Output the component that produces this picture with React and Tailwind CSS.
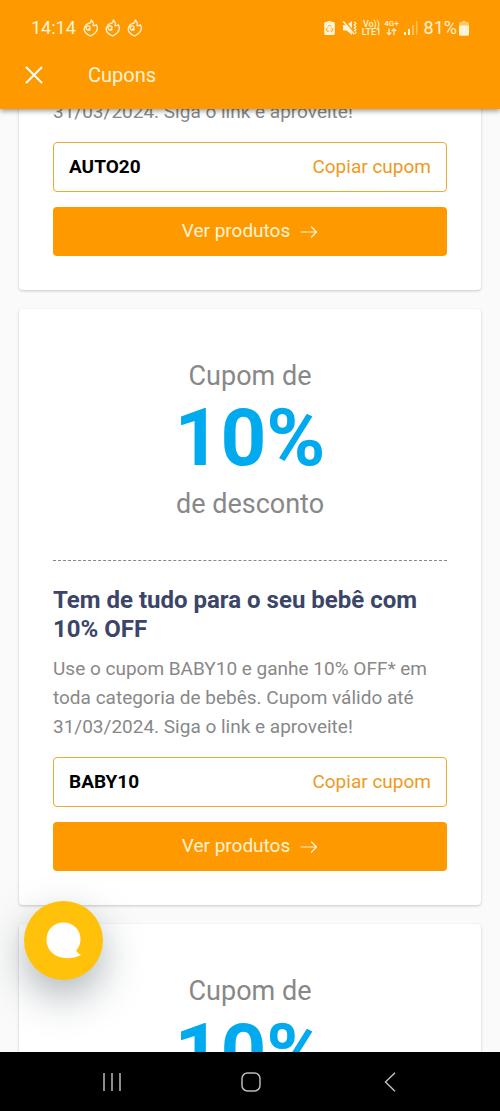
const coupons = [
    {
        id: 1,
        description: '31/03/2024. Siga o link e aproveite!',
        code: 'AUTO20',
    },
    {
        id: 2,
        discount: '10%',
        title: 'Tem de tudo para o seu bebê com 10% OFF',
        description: 'Use o cupom BABY10 e ganhe 10% OFF* em toda categoria de bebês. Cupom válido até 31/03/2024. Siga o link e aproveite!',
        code: 'BABY10',
    },
    {
        id: 3,
        discount: '10%',
    },
];

const SwirlIcon = () => (
    <svg width="16" height="18" viewBox="0 0 16 18" fill="none" stroke="currentColor" strokeWidth="1.3" strokeLinecap="round" strokeLinejoin="round">
        <path d="M5.600 10.200C7 10 7.600 8.200 6.500 7.300 5.200 6.300 3 7.300 3 9c0 1.800 2.300 2.700 4.200 1.700M2.200 7C.6 9.700 1.200 12.800 3.600 14.800c1.100.9 2.600 1.400 4.100 2.200 1.600-.9 3.200-1.800 4.500-3.100 2.400-2.400 3-5 1-8.200-.9.8-1.800 1.100-3.200 1C10.700 4.600 10.200 2.500 8.300 1 8.400 3.700 7.200 4.200 5.300 4.600 4 4.900 2.900 5.700 2.200 7" />
    </svg>
);

const BatterySaverIcon = () => (
    <svg width="11" height="16" viewBox="0 0 11 16" fill="none">
        <path d="M3.500 1h4v1H9.300c.9 0 1.500.6 1.500 1.500v10c0 .9-.6 1.500-1.500 1.500H1.700C.8 15 .2 14.400.2 13.500v-10C.2 2.600.8 2 1.700 2h1.800z" fill="currentColor" />
        <path d="M4.200 6.500 5.500 5l1.300 1.500M7.600 7.800l1.100 2-.8 1.400H6.500M4.700 11.200H3.100l-.8-1.400 1.100-2" stroke="#ff9900" strokeWidth="1" />
    </svg>
);

const MuteIcon = () => (
    <svg width="15" height="16" viewBox="0 0 15 16" fill="none">
        <path d="M1 5h3.500L10 1v14L4.500 10.500H1z" fill="currentColor" />
        <path d="M12.300 2l1.500 1.500L12.300 5l1.500 1.500L12.300 8l1.500 1.500-1.500 1.500 1.500 1.500-1.500 1.500" stroke="currentColor" strokeWidth="1.400" />
        <path d="M2.600 1 13 13" stroke="#ff9900" strokeWidth="1.300" />
        <path d="M1.300 1.500 12 14" stroke="currentColor" strokeWidth="1.400" />
    </svg>
);

const SignalIcon = () => (
    <svg width="14" height="14" viewBox="0 0 14 14" fill="currentColor">
        <rect x="0" y="11" width="2" height="3" />
        <rect x="4" y="8" width="2" height="6" />
        <rect x="8" y="4" width="2" height="10" opacity=".4" />
        <rect x="12" y="0" width="1.500" height="14" opacity=".4" />
    </svg>
);

const BatteryIcon = () => (
    <svg width="10" height="15" viewBox="0 0 10 15" fill="currentColor">
        <path d="M3 0h4v1h1.500C9.400 1 10 1.600 10 2.500V5H0V2.500C0 1.600.6 1 1.500 1H3z" opacity=".5" />
        <path d="M0 4.500h10v8.800c0 .9-.6 1.500-1.500 1.500h-7C.6 14.800 0 14.200 0 13.300z" />
    </svg>
);

const ArrowIcon = () => (
    <svg width="18" height="14" viewBox="0 0 18 14" fill="none" stroke="currentColor" strokeWidth="1.200" strokeLinecap="round" strokeLinejoin="round">
        <path d="M1 7h15.500M11.500 2l5 5-5 5" />
    </svg>
);

const StatusBar = () => (
    <div className="flex h-14 items-center justify-between px-[31px] text-lg text-[#fff3d6]">
        <div className="flex items-center">
            <span className="mr-[7px]">14:14</span>
            <div className="flex gap-[6px]">
                <SwirlIcon />
                <SwirlIcon />
                <SwirlIcon />
            </div>
        </div>
        <div className="flex items-center">
            <BatterySaverIcon />
            <span className="ml-[7px]"><MuteIcon /></span>
            <div className="ml-[5px] text-center text-[9px] font-medium leading-[8px]">
                <div>Vo))</div>
                <div>LTE1</div>
            </div>
            <div className="ml-[3px] flex flex-col items-center text-[8px] font-medium leading-[8px]">
                <span>4G+</span>
                <svg width="11" height="8" viewBox="0 0 11 8" fill="none" stroke="currentColor" strokeWidth="1.200">
                    <path d="M3 .5v6M.8 4.500 3 6.700l2.200-2.200M8 7V1M5.800 3 8 .8 10.200 3" />
                </svg>
            </div>
            <span className="ml-[5px]"><SignalIcon /></span>
            <span className="ml-[6px] mr-[2px]">81%</span>
            <BatteryIcon />
        </div>
    </div>
);

const CouponCard = ({ coupon }) => (
    <article className="rounded bg-white px-[34px] pb-[34px] shadow-[0_1px_3px_rgba(0,0,0,0.2)]">
        {coupon.discount && (
            <div className="pt-[51px] text-center text-[27px] leading-8 text-[#888888]">
                <p>Cupom de</p>
                <p className="mb-1 text-[80px] font-bold leading-[92px] text-[#00aaee]">{coupon.discount}</p>
                {coupon.title && <p>de desconto</p>}
            </div>
        )}
        {coupon.title && (
            <h2 className="mt-10 border-t border-dashed border-[#888888] pt-[25px] text-2xl font-bold leading-[29px] text-[#3b4568]">
                {coupon.title}
            </h2>
        )}
        {coupon.code && (
            <>
                <p className="mt-[10px] text-[19px] leading-[29px] text-[#888888]">{coupon.description}</p>
                <div className="mt-4 flex h-[50px] items-center justify-between rounded border border-[#eeaa33] px-[15px] text-[19px]">
                    <span className="font-bold text-black">{coupon.code}</span>
                    <button type="button" className="text-[#ee9922]">Copiar cupom</button>
                </div>
                <a href="#" className="mt-[15px] flex h-[49px] items-center justify-center gap-[10px] rounded bg-[#ff9900] text-[19px] text-[#fff3d6]">
                    Ver produtos
                    <ArrowIcon />
                </a>
            </>
        )}
    </article>
);

const App = () => {
    return (
        <div className="flex h-screen flex-col overflow-hidden bg-[#fafafa] font-['Roboto',sans-serif]">
            <header className="z-10 h-[109px] shrink-0 bg-[#ff9900] shadow-[0_2px_5px_rgba(0,0,0,0.4)]">
                <StatusBar />
                <div className="flex h-[38px] items-center gap-[45px] pl-[25px] text-white">
                    <button type="button" aria-label="Fechar">
                        <svg width="18" height="18" viewBox="0 0 18 18" fill="none" stroke="currentColor" strokeWidth="2">
                            <path d="M1 1l16 16M17 1 1 17" />
                        </svg>
                    </button>
                    <h1 className="text-xl text-[#fff3d6]">Cupons</h1>
                </div>
            </header>

            <main className="relative min-h-0 flex-1 overflow-hidden px-[19px]">
                {/* coupon list */}
                <div className="-mt-[22px] flex flex-col gap-[19px]">
                    {coupons.map((coupon) => (
                        <CouponCard key={coupon.id} coupon={coupon} />
                    ))}
                </div>

                {/* chat button */}
                <button
                    type="button"
                    aria-label="Chat"
                    className="absolute bottom-[72px] left-6 flex size-[79px] items-center justify-center rounded-full bg-[#ffc10a] shadow-[0_16px_40px_rgba(20,40,50,0.35)]"
                >
                    <svg width="36" height="37" viewBox="0 0 36 37" fill="white">
                        <path d="M17.500.5C27 .5 34.500 7.500 34.500 17c0 4.500-1.500 8.500-4.300 11.500.8 1.800 2.300 3.300 5 4.200-4 2.500-9 3.500-14 3.500C9 36.200.5 28.500.5 18 .5 7.500 8 .5 17.500.5z" />
                    </svg>
                </button>
            </main>

            <nav className="flex h-[59px] shrink-0 items-center justify-around bg-black pl-[42px] pr-10 text-[#bbbbbb]">
                <button type="button" aria-label="Recentes">
                    <svg width="20" height="20" viewBox="0 0 20 20" stroke="currentColor" strokeWidth="1.500">
                        <path d="M2 1v18M10 1v18M18 1v18" />
                    </svg>
                </button>
                <button type="button" aria-label="Início">
                    <svg width="20" height="20" viewBox="0 0 20 20" fill="none" stroke="currentColor" strokeWidth="1.500">
                        <rect x="1" y="1" width="18" height="18" rx="5.500" />
                    </svg>
                </button>
                <button type="button" aria-label="Voltar">
                    <svg width="20" height="20" viewBox="0 0 20 20" fill="none" stroke="currentColor" strokeWidth="1.500">
                        <path d="M15 .8 5.500 10l9.500 9.200" />
                    </svg>
                </button>
            </nav>
        </div>
    );
};

export default App;
